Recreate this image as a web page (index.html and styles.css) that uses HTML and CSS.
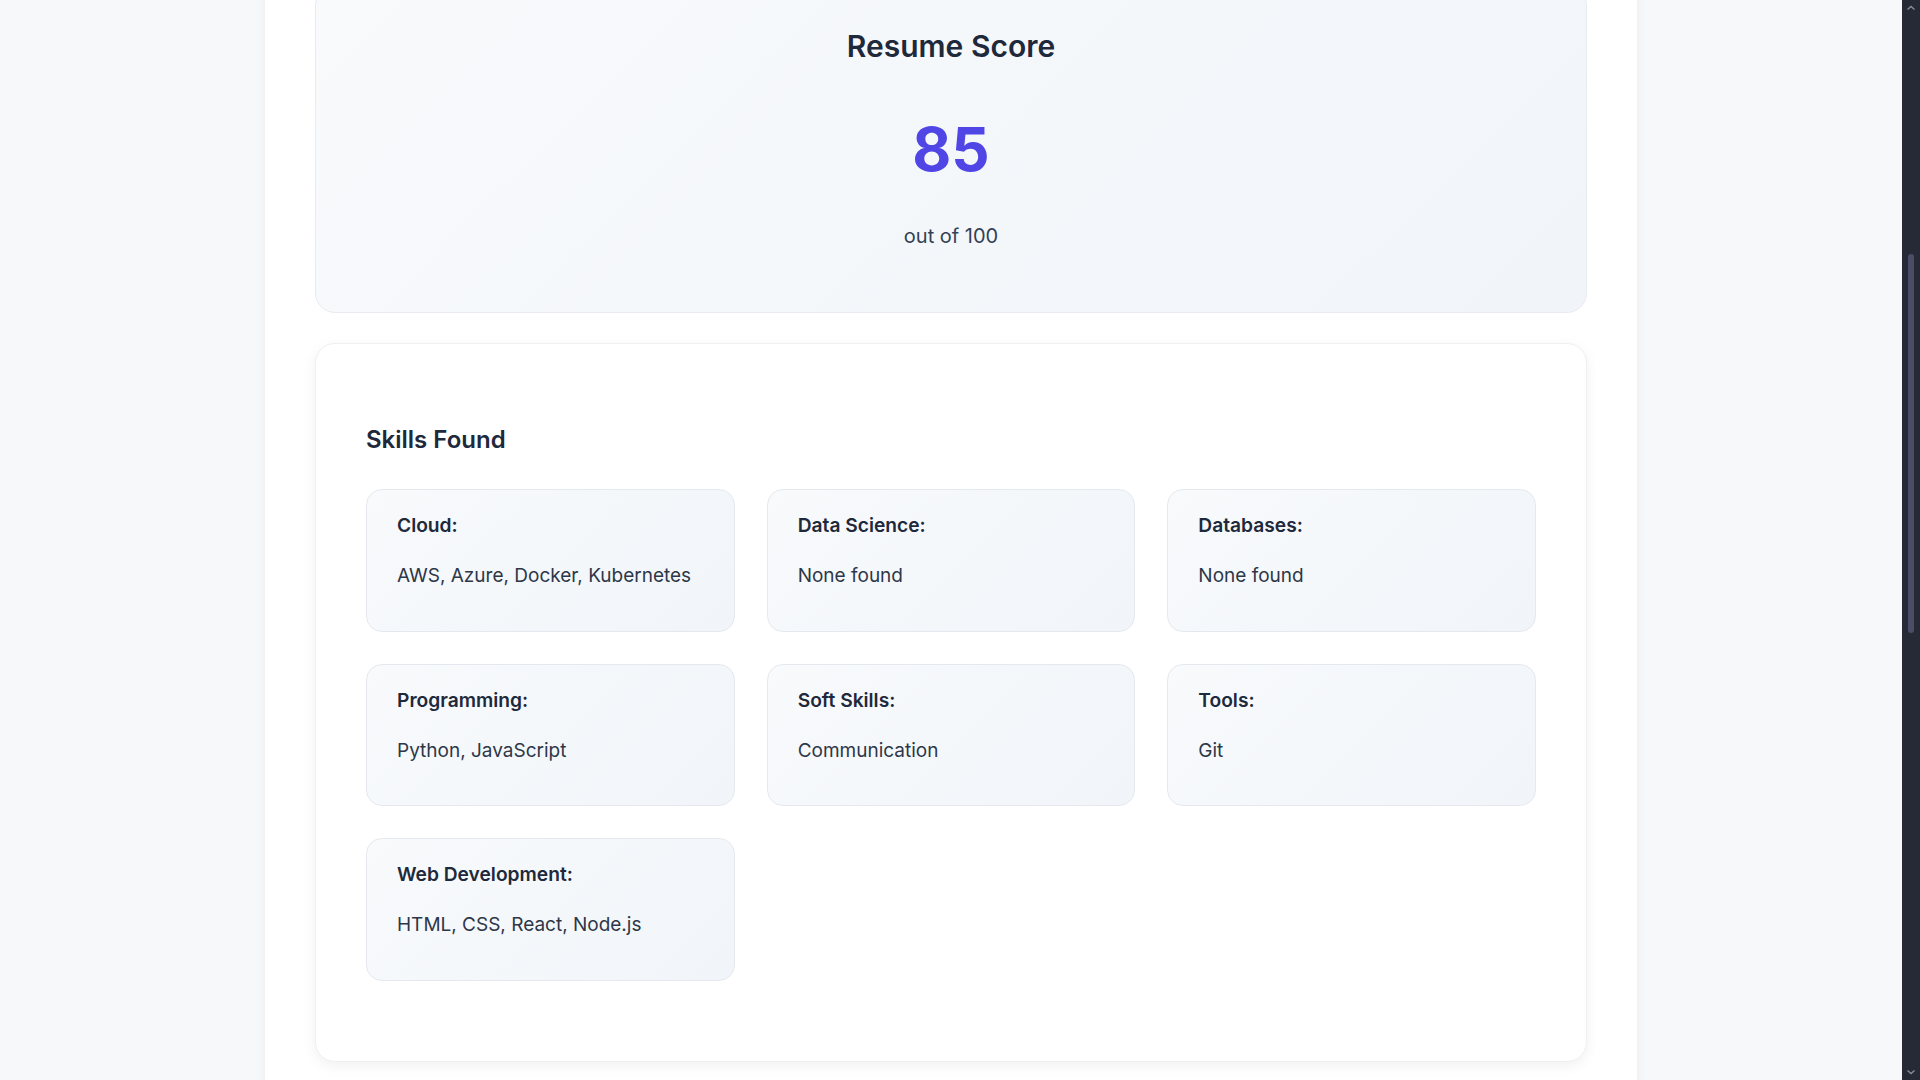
FILE: index.html
```html
<!DOCTYPE html>
<html lang="en">
<head>
<meta charset="utf-8">
<title>Resume Analysis</title>
<link rel="stylesheet" href="styles.css">
</head>
<body>
<div class="screen">
  <div class="viewport">
    <main class="page">
      <section class="score-card">
        <h2 class="score-title">Resume Score</h2>
        <div class="score-value">85</div>
        <p class="score-caption">out of 100</p>
      </section>

      <section class="skills-card">
        <h2 class="skills-title">Skills Found</h2>
        <div class="skills-grid">
          <div class="skill">
            <h4 class="skill-name">Cloud:</h4>
            <p class="skill-list">AWS, Azure, Docker, Kubernetes</p>
          </div>
          <div class="skill">
            <h4 class="skill-name">Data Science:</h4>
            <p class="skill-list">None found</p>
          </div>
          <div class="skill">
            <h4 class="skill-name">Databases:</h4>
            <p class="skill-list">None found</p>
          </div>
          <div class="skill">
            <h4 class="skill-name">Programming:</h4>
            <p class="skill-list">Python, JavaScript</p>
          </div>
          <div class="skill">
            <h4 class="skill-name">Soft Skills:</h4>
            <p class="skill-list">Communication</p>
          </div>
          <div class="skill">
            <h4 class="skill-name">Tools:</h4>
            <p class="skill-list">Git</p>
          </div>
          <div class="skill">
            <h4 class="skill-name">Web Development:</h4>
            <p class="skill-list">HTML, CSS, React, Node.js</p>
          </div>
        </div>
      </section>
    </main>
  </div>

  <div class="scrollbar" aria-hidden="true">
    <svg class="scroll-arrow" width="18" height="16" viewBox="0 0 18 16"><path d="M5.5 9.5 L9 6.5 L12.5 9.5" fill="none" stroke="#8b8e9a" stroke-width="1.4"/></svg>
    <div class="scroll-track">
      <div class="scroll-thumb"></div>
    </div>
    <svg class="scroll-arrow" width="18" height="16" viewBox="0 0 18 16"><path d="M5.5 6.5 L9 9.5 L12.5 6.5" fill="none" stroke="#8b8e9a" stroke-width="1.4"/></svg>
  </div>
</div>
</body>
</html>
```

FILE: styles.css
```css
* {
  box-sizing: border-box;
}

html, body {
  margin: 0;
  height: 1080px;
  overflow: hidden;
}

body {
  font-family: Inter, "Liberation Sans", Arial, sans-serif;
  color: #1e293b;
  background: #f7f8fa;
}

.screen {
  display: flex;
  height: 1080px;
}

.viewport {
  flex: 1;
  overflow: hidden;
  background: #f7f8fa;
}

/* page scrolled down by 64px */
.page {
  width: 1372px;
  margin: -64px auto 0;
  padding: 50px;
  min-height: 1300px;
  background: #ffffff;
  box-shadow: 0 0 12px rgba(15, 23, 42, 0.05);
}

.score-card {
  padding: 40px 40px 40px;
  border: 1px solid #e8ebf0;
  border-radius: 20px;
  background: linear-gradient(135deg, #f8fafc 0%, #f1f5f9 100%);
  text-align: center;
}

.score-title {
  margin: 0;
  font-size: 30px;
  line-height: 39px;
  font-weight: 600;
  color: #1e293b;
}

.score-value {
  margin-top: 47px;
  font-size: 60px;
  line-height: 72px;
  font-weight: 700;
  color: #4f46e5;
}

.score-caption {
  margin: 37px 0 21px;
  font-size: 20px;
  line-height: 29px;
  color: #334155;
}

.skills-card {
  margin-top: 30px;
  padding: 50px 50px 50px;
  background: #ffffff;
  border: 1px solid #eef0f3;
  border-radius: 20px;
  box-shadow: 0 4px 14px rgba(15, 23, 42, 0.06);
}

.skills-title {
  margin: 28px 0 31px;
  font-size: 24px;
  line-height: 36px;
  font-weight: 600;
  color: #1e293b;
}

.skills-grid {
  display: grid;
  grid-template-columns: repeat(3, 1fr);
  gap: 32px;
  margin-bottom: 30px;
}

.skill {
  height: 142.5px;
  padding: 21px 30px;
  border: 1px solid #e5e9ef;
  border-radius: 16px;
  background: linear-gradient(135deg, #f8fafc 0%, #f1f5f9 100%);
}

.skill-name {
  margin: 0 0 23px;
  font-size: 19.2px;
  line-height: 28px;
  font-weight: 600;
  color: #1e293b;
}

.skill-list {
  margin: 0;
  font-size: 19px;
  line-height: 28px;
  color: #2d3748;
}

.scrollbar {
  width: 18px;
  flex: none;
  display: flex;
  flex-direction: column;
  background: #262a36;
}

.scroll-arrow {
  display: block;
  flex: none;
}

.scroll-track {
  flex: 1;
  padding: 238px 0 0 6px;
}

.scroll-thumb {
  width: 6px;
  height: 379px;
  border-radius: 3px;
  background: #4b4e66;
}
```
